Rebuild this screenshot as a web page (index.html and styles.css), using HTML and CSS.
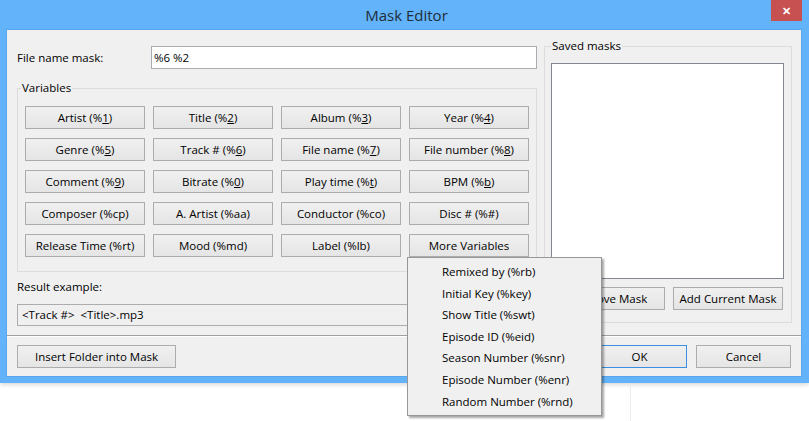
FILE: index.html
```html
<!DOCTYPE html>
<html>
<head>
    <title>Mask Editor</title>
    <link rel="stylesheet" href="styles.css">
</head>
<body>
    <div class="desk-line"></div>
    <div class="window">
        <div class="titlebar">
            <span class="title">Mask Editor</span>
            <div class="close">&#x2715;</div>
        </div>
        <div class="client">
            <div class="content">
                <div class="left">
                    <div class="mask-row">
                        <label class="mask-label">File name mask:</label>
                        <div class="edit">%6 %2</div>
                    </div>
                    <fieldset class="group variables">
                        <legend>Variables</legend>
                        <div class="var-grid">
                            <button class="btn">Artist (%<u>1</u>)</button>
                            <button class="btn">Title (%<u>2</u>)</button>
                            <button class="btn">Album (%<u>3</u>)</button>
                            <button class="btn">Year (%<u>4</u>)</button>
                            <button class="btn">Genre (%<u>5</u>)</button>
                            <button class="btn">Track # (%<u>6</u>)</button>
                            <button class="btn">File name (%<u>7</u>)</button>
                            <button class="btn">File number (%<u>8</u>)</button>
                            <button class="btn">Comment (%<u>9</u>)</button>
                            <button class="btn">Bitrate (%<u>0</u>)</button>
                            <button class="btn">Play time (%<u>t</u>)</button>
                            <button class="btn">BPM (%<u>b</u>)</button>
                            <button class="btn">Composer (%cp)</button>
                            <button class="btn">A. Artist (%aa)</button>
                            <button class="btn">Conductor (%co)</button>
                            <button class="btn">Disc # (%#)</button>
                            <button class="btn">Release Time (%rt)</button>
                            <button class="btn">Mood (%md)</button>
                            <button class="btn">Label (%lb)</button>
                            <button class="btn">More Variables</button>
                        </div>
                    </fieldset>
                    <div class="result-label">Result example:</div>
                    <div class="result-box">&lt;Track #&gt;&nbsp; &lt;Title&gt;.mp3</div>
                </div>
                <div class="right">
                    <fieldset class="group saved">
                        <legend>Saved masks</legend>
                        <div class="listbox"></div>
                        <div class="saved-buttons">
                            <button class="btn wide">Remove Mask</button>
                            <button class="btn wide">Add Current Mask</button>
                        </div>
                    </fieldset>
                </div>
            </div>
            <div class="bottom">
                <button class="btn folder">Insert Folder into Mask</button>
                <div class="spacer"></div>
                <button class="btn dlg default">OK</button>
                <button class="btn dlg">Cancel</button>
            </div>
        </div>
    </div>
    <div class="menu">
        <div class="menu-item">Remixed by (%rb)</div>
        <div class="menu-item">Initial Key (%key)</div>
        <div class="menu-item">Show Title (%swt)</div>
        <div class="menu-item">Episode ID (%eid)</div>
        <div class="menu-item">Season Number (%snr)</div>
        <div class="menu-item">Episode Number (%enr)</div>
        <div class="menu-item">Random Number (%rnd)</div>
    </div>
</body>
</html>
```

FILE: styles.css
```css
body {
    margin: 0;
    background: #ffffff;
    font-family: "Open Sans", "Noto Sans", sans-serif;
    font-size: 11.5px;
    color: #000;
    position: relative;
    width: 809px;
    height: 421px;
    overflow: hidden;
}

.window {
    width: 809px;
    height: 383px;
    background: #62b3f9;
    box-shadow: 0 2px 4px rgba(0,0,0,0.15);
}

.titlebar {
    height: 30px;
    display: flex;
    align-items: center;
    justify-content: center;
    position: relative;
}

.title {
    font-size: 15px;
    color: #1f2d3a;
    margin-left: 4px;
}

.close {
    position: absolute;
    right: 7px;
    top: 0;
    width: 31px;
    height: 21px;
    background: #c75050;
    color: #fff;
    font-size: 11px;
    font-weight: bold;
    display: flex;
    align-items: center;
    justify-content: center;
}

.client {
    margin: 0 8px 0 7px;
    height: 346px;
    background: #f0f0f0;
    box-shadow: 0 0 0 1px #58a6ec;
    display: flex;
    flex-direction: column;
}

.content {
    display: flex;
    padding: 8px 0 0 10px;
    height: 297px;
    border-bottom: 1px solid #a0a0a0;
}

.left {
    width: 520px;
    padding-top: 8px;
}

.mask-row {
    display: flex;
    align-items: center;
    height: 23px;
}

.mask-label {
    width: 134px;
}

.edit {
    flex: 1;
    height: 21px;
    line-height: 21px;
    border: 1px solid #abadb3;
    background: #fff;
    padding-left: 2px;
}

.group {
    margin: 0;
    padding: 0;
    border: 1px solid #dcdcdc;
    min-width: 0;
}

.group legend {
    padding: 0 1px;
    margin-left: 3px;
    line-height: 16px;
    height: 16px;
}

.variables {
    margin-top: 11px;
    height: 192px;
    box-sizing: border-box;
}

.var-grid {
    display: grid;
    grid-template-columns: repeat(4, 120px);
    grid-auto-rows: 23px;
    column-gap: 8px;
    row-gap: 9px;
    margin: 10px 0 0 7px;
}

.btn {
    font-family: inherit;
    font-size: 11.5px;
    color: #000;
    border: 1px solid #acacac;
    background: linear-gradient(#f0f0f0, #e5e5e5);
    padding: 0;
    margin: 0;
    height: 23px;
    cursor: default;
}

.result-label {
    margin-top: 7px;
    line-height: 16px;
}

.result-box {
    margin-top: 9px;
    height: 20px;
    line-height: 20px;
    border: 1px solid #adadad;
    background: #f0f0f0;
    padding-left: 4px;
}

.right {
    margin-left: 7px;
    width: 248px;
}

.saved {
    height: 285px;
    box-sizing: border-box;
}

.saved legend {
    margin-left: 6px;
}

.listbox {
    height: 214px;
    margin: 9px 7px 0 6px;
    border: 1px solid #828790;
    background: #fff;
}

.saved-buttons {
    display: flex;
    justify-content: flex-end;
    gap: 8px;
    margin-top: 8px;
    padding-right: 8px;
}

.wide {
    width: 110px;
}

.bottom {
    display: flex;
    padding: 8px 10px 0 10px;
    border-top: 1px solid #fff;
}

.folder {
    width: 159px;
}

.spacer {
    flex: 1;
}

.dlg {
    width: 95px;
    margin-left: 9px;
}

.default {
    border-color: #3c8fe0;
}

.menu {
    position: absolute;
    left: 407px;
    top: 257px;
    width: 193px;
    padding: 3px 0;
    border: 1px solid #979797;
    background: #f0f0f0;
    box-shadow: 2px 2px 2px rgba(0,0,0,0.35);
}

.menu-item {
    height: 21.6px;
    line-height: 21.6px;
    padding-left: 34px;
}

.desk-line {
    position: absolute;
    left: 630px;
    top: 383px;
    width: 1px;
    height: 38px;
    background: #ececec;
}
```
